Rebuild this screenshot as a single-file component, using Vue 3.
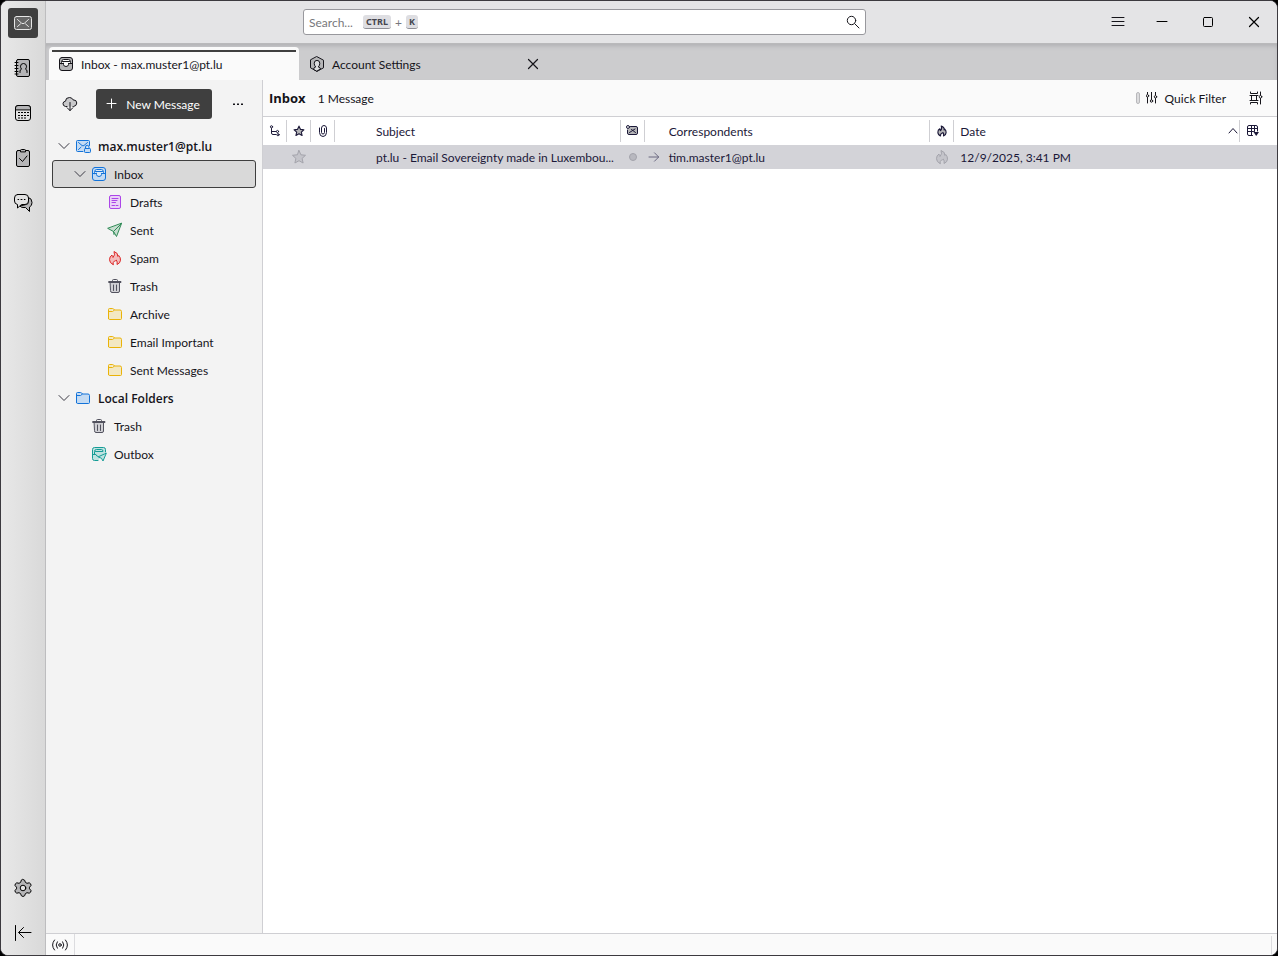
<script setup>
import { ref } from 'vue'

const query = ref('')

const spaces = [
  { id: 'mail', label: 'Mail', active: true },
  { id: 'book', label: 'Address Book' },
  { id: 'calendar', label: 'Calendar' },
  { id: 'tasks', label: 'Tasks' },
  { id: 'chat', label: 'Chat' },
]

const folders = [
  { name: 'max.muster1@pt.lu', icon: 'account', level: 1, tone: 'blue', open: true, bold: true },
  { name: 'Inbox', icon: 'inbox', level: 2, tone: 'blue', open: true, selected: true },
  { name: 'Drafts', icon: 'draft', level: 3, tone: 'purple' },
  { name: 'Sent', icon: 'sent', level: 3, tone: 'green' },
  { name: 'Spam', icon: 'spam', level: 3, tone: 'red' },
  { name: 'Trash', icon: 'trash', level: 3, tone: 'gray' },
  { name: 'Archive', icon: 'folder', level: 3, tone: 'yellow' },
  { name: 'Email Important', icon: 'folder', level: 3, tone: 'yellow' },
  { name: 'Sent Messages', icon: 'folder', level: 3, tone: 'yellow' },
  { name: 'Local Folders', icon: 'folder', level: 1, tone: 'blue', open: true, bold: true },
  { name: 'Trash', icon: 'trash', level: 2, tone: 'gray' },
  { name: 'Outbox', icon: 'outbox', level: 2, tone: 'teal' },
]
</script>

<template>
  <svg class="sprite" aria-hidden="true">
    <symbol id="i-mail" viewBox="0 0 20 20">
      <rect class="f" x="1.5" y="3.5" width="17" height="13" rx="2" />
      <path d="M4.500 6.500l4 3.600q1.500 1.200 3 0l4-3.600M4.500 13.500l3-2.600M15.500 13.500l-3-2.600" />
    </symbol>
    <symbol id="i-book" viewBox="0 0 20 20">
      <rect class="f" x="3.500" y="1.500" width="13" height="17" rx="1.500" />
      <path d="M2 4.500h3M2 7.500h3M2 10.500h3M2 13.500h3M2 16h3M7 14.500v-1.500q0-1.300 1.500-1.800Q7.500 9.800 7.500 8.200 7.700 5.500 10.500 5.500t3 2.700q0 1.600-1 3 1.500.5 1.500 1.800v1.500" />
    </symbol>
    <symbol id="i-calendar" viewBox="0 0 20 20">
      <rect class="paper" x="2.500" y="2.500" width="15" height="15" rx="2.500" />
      <path class="f" d="M2.500 6.500V5Q2.500 2.500 5 2.500h10q2.500 0 2.500 2.500v1.500z" />
      <path class="dash" d="M5 9.500h11M5 12.500h11M5 15h8" />
    </symbol>
    <symbol id="i-tasks" viewBox="0 0 20 20">
      <rect class="f" x="3.500" y="2.500" width="13" height="16" rx="1.500" />
      <path class="f" d="M7.500 3.500v-1q0-1 1-1h3q1 0 1 1v1z" />
      <path d="M6.500 10.500l3 3 4.500-5.500" />
    </symbol>
    <symbol id="i-chat" viewBox="0 0 20 20">
      <path class="f" d="M15.500 4.500q3.500.8 3.500 5 0 3.500-2.500 4.500v4.500l-4-4H10q-2 0-3-1.500l6-1.500q2.500 0 2.500-3z" />
      <path class="paper" d="M4.500 1.500H12q3.500 0 3.500 3.500v3q0 3.500-3.500 3.500H8.500l-4 3.500v-3.500Q1.500 11 1.500 8V5q0-3.500 3-3.500z" />
      <path d="M5 6.500h.7M8 6.500h1M11.300 6.500h.7" />
    </symbol>
    <symbol id="i-gear" viewBox="0 0 20 20">
      <path class="f" d="M10 1.500l1.700.8.700 2.100 1.600.9 2.200-.5 1.500 1.100.3 1.600-1.500 1.700v1.600l1.500 1.700-.3 1.600-1.500 1.100-2.200-.5-1.600.9-.7 2.100-1.700.8-1.700-.8-.7-2.100-1.600-.9-2.200.5-1.500-1.100-.3-1.600 1.500-1.700V9.200L2 7.500l.3-1.600 1.500-1.100 2.200.5 1.600-.9.700-2.100z" />
      <circle class="paper" cx="10" cy="10" r="2.800" />
    </symbol>
    <symbol id="i-collapse" viewBox="0 0 20 20">
      <path d="M2.500 2.500v15M18 9.500H6M10.500 4.500L5.500 9.500l5 5" />
    </symbol>
    <symbol id="i-inbox" viewBox="0 0 16 16">
      <rect class="f" x="1.500" y="1.500" width="13" height="13" rx="2.500" />
      <path class="paper" d="M3.500 7.500v-1q0-3 2-3h5q2 0 2 3v1h-2v1q-.2 2-2.500 2t-2.500-2v-1zM4.500 5.500h7M1.500 7.500h4M10.500 7.500h4" />
    </symbol>
    <symbol id="i-user" viewBox="0 0 16 16">
      <path class="f" d="M8 .7l6.500 3.500v7.600L8 15.400 1.500 11.800V4.200z" />
      <path class="paper" d="M4.500 13q0-1.500 2.200-2-1.500-1.600-1.500-3.800Q5.300 4.400 8 4.400t2.800 2.800q0 2.200-1.500 3.800 2.200.5 2.200 2L8 15z" />
    </symbol>
    <symbol id="i-cloud" viewBox="0 0 16 16">
      <path class="cloud" d="M5 10.500H3.500Q1 10 1 7.700 1 5.500 3.500 5.200 3.500 1.500 7.500 1.500q2.500 0 3.500 2.300 3.800 0 3.800 3.200-.2 3-3.300 3.500H11" />
      <path d="M8 6.500v8M5.200 11.800L8 14.600 10.800 11.800" />
    </symbol>
    <symbol id="i-plus" viewBox="0 0 16 16"><path d="M7.500 3v9M3 7.500h9" /></symbol>
    <symbol id="i-more" viewBox="0 0 16 16"><path class="solid" d="M3 7.500h2v1.500H3zM7 7.500h2v1.500H7zM11 7.500h2v1.500h-2z" /></symbol>
    <symbol id="i-chevron" viewBox="0 0 16 16"><path d="M3 5.500l5 5 5-5" /></symbol>
    <symbol id="i-up" viewBox="0 0 12 12"><path d="M2 8l4-4.500L10 8" /></symbol>
    <symbol id="i-close" viewBox="0 0 16 16"><path d="M3.500 3.500l9 9M12.500 3.500l-9 9" /></symbol>
    <symbol id="i-search" viewBox="0 0 16 16"><circle cx="6.500" cy="6.500" r="4.200" /><path d="M9.700 9.700l4.300 4.300" /></symbol>
    <symbol id="i-menu" viewBox="0 0 16 16"><path d="M2 3.500h12M2 7.500h12M2 11.500h12" /></symbol>
    <symbol id="i-min" viewBox="0 0 16 16"><path d="M3 7.500h10" /></symbol>
    <symbol id="i-max" viewBox="0 0 16 16"><rect x="3.500" y="3.500" width="9" height="9" rx="1" /></symbol>
    <symbol id="i-account" viewBox="0 0 16 16">
      <path class="f" d="M8 13.500H2.500q-1 0-1-1v-9q0-1 1-1h11q1 0 1 1v4" />
      <path d="M3.500 4.500L7 7.500q1 .7 2 0l3.500-3M3.500 11.500l2.500-2.300" />
      <path d="M10.500 10.500V9q0-1.700 1.700-1.700T14 9v1.500" />
      <rect class="f" x="9.500" y="10.500" width="6" height="4" rx=".8" />
    </symbol>
    <symbol id="i-draft" viewBox="0 0 16 16">
      <rect class="f" x="2.500" y="1.500" width="11" height="13" rx="1.500" />
      <path d="M5 4.500h6M5 6.500h5M5 8.500h3.500M5 11.500h2.500M9 11.500h2" />
    </symbol>
    <symbol id="i-sent" viewBox="0 0 16 16">
      <path class="f" d="M14.500 1.500L9.500 14.500l-3-5-5.500-3z" />
      <path d="M14.500 1.500l-8 8 .5 3" />
    </symbol>
    <symbol id="i-spam" viewBox="0 0 16 16">
      <path class="f" d="M6 14.500Q2.500 13 2.500 9.700q0-3.300 2.500-4.700 0 1.500 1 2.500Q8.500 5 7 1.500q4.500 1.500 3.800 5 .7-.3.900-1 2 2 1.800 4.700-.2 3-3.500 4.300.8-2.800-.8-4.500-.7 1-1.700 1Q5.800 12 6 14.500z" />
    </symbol>
    <symbol id="i-trash" viewBox="0 0 16 16">
      <path class="f" d="M3.500 4.500h9v8.500q0 1.500-1.500 1.500H5q-1.500 0-1.500-1.500z" />
      <path d="M2 3.500h12v1H2zM5.500 3.500v-1q0-1 1-1h3q1 0 1 1v1M6.500 7v5.500M9.500 7v5.500" />
    </symbol>
    <symbol id="i-folder" viewBox="0 0 16 16">
      <path class="f" d="M1.500 12.500v-9q0-1 1-1h3q1 0 1.500 1l.5.500H13q1.500 0 1.500 1.500v7q0 1-1 1h-11q-1 0-1-1zM2 5.500h3.500l2-1.500" />
    </symbol>
    <symbol id="i-outbox" viewBox="0 0 16 16">
      <path class="f" d="M7 14.500H3.500q-2 0-2-2v-9q0-2 2-2h9q2 0 2 2V6" />
      <path d="M3.500 8V5.500q0-2 2-2h5q1.500 0 1.500 1.500M4.500 5.500h7M1.500 8.500h3.500q.5 2 2 2" />
      <path class="f" d="M15.200 7.500l-3.200 7.500-1.500-2.700-3-1.300z" />
    </symbol>
    <symbol id="i-filter" viewBox="0 0 12 12">
      <path d="M1.500 0v2M1.500 5.500V11M5.500 0v7.500M9.500 0v3M9.500 6.500V11" />
      <circle cx="1.500" cy="3.800" r="1.200" /><circle cx="5.500" cy="9" r="1.200" /><circle cx="9.500" cy="4.800" r="1.200" />
    </symbol>
    <symbol id="i-display" viewBox="0 0 16 16">
      <path d="M2.500 2v1.500h7V2M2.500 14v-1.500h7V14M2 5.500h8M2 10.500h8M3.500 5.500v5M8.500 5.500v5M12.500 2v3M12.500 8.500V14" />
      <circle cx="12.500" cy="6.800" r="1.300" />
    </symbol>
    <symbol id="i-thread" viewBox="0 0 12 12">
      <path d="M2.500 3.500v4.500q0 1.500 1.500 1.500h3M2.500 6.500h4.500" />
      <circle cx="2.500" cy="1.800" r="1.100" /><circle cx="8.500" cy="6.500" r="1.100" /><circle cx="9" cy="9.700" r="1.100" />
    </symbol>
    <symbol id="i-star" viewBox="0 0 16 16">
      <path class="f" d="M8 1.500l1.900 4.300 4.600.5-3.400 3.100 1 4.600L8 11.700 3.900 14l1-4.600L1.500 6.300l4.600-.5z" />
    </symbol>
    <symbol id="i-clip" viewBox="0 0 12 12">
      <path d="M2.500 3v4.500q.2 4 3.500 4t3.500-4V3Q9.300.5 7 .5T4.500 3v4.500Q4.600 9 6 9t1.500-1.500V3.500" />
    </symbol>
    <symbol id="i-read" viewBox="0 0 12 12">
      <path class="f" d="M4.500 1.500h5.500q1.500 0 1.500 1.500v5q0 1.500-1.500 1.500H3Q1.500 9.500 1.500 8V5" />
      <path d="M3.500 7.500l5.500-3.500M9.500 7.500L5.500 4.500" /><circle class="paper" cx="2" cy="2" r="1.500" />
    </symbol>
    <symbol id="i-columns" viewBox="0 0 12 12">
      <path d="M5.500 10.500H2q-1.500 0-1.500-1.500V2Q.5.500 2 .5h7Q10.500.5 10.500 2v4M.5 3.500h10M.5 6.500h6M4.500.5v10M7.500.5v6" />
      <path class="solid" d="M6.500 7h5.500L9.200 11z" />
    </symbol>
    <symbol id="i-arrow" viewBox="0 0 12 12"><path d="M1 6h9.500M6.500 1.800L10.700 6l-4.200 4.200" /></symbol>
    <symbol id="i-online" viewBox="0 0 16 16">
      <circle cx="8" cy="8" r="1.300" />
      <path d="M5.300 4.800Q2.900 8 5.300 11.200M10.700 4.800q2.400 3.200 0 6.400M2.500 3Q-1.500 8 2.500 13M13.500 3q4 5 0 10" />
    </symbol>
  </svg>

  <div class="window">
    <nav class="spaces" aria-label="Spaces">
      <button v-for="s in spaces" :key="s.id" type="button" class="space" :class="{ active: s.active }" :aria-label="s.label">
        <svg class="ic20"><use :href="'#i-' + s.id" /></svg>
      </button>
      <span class="grow"></span>
      <button type="button" class="space" aria-label="Settings"><svg class="ic20"><use href="#i-gear" /></svg></button>
      <button type="button" class="space" aria-label="Collapse"><svg class="ic20"><use href="#i-collapse" /></svg></button>
    </nav>

    <div class="main">
      <header class="titlebar">
        <form class="search" @submit.prevent>
          <input v-model="query" type="text" placeholder="Search..." aria-label="Search" />
          <span class="keys"><kbd>CTRL</kbd><span>+</span><kbd>K</kbd></span>
          <button type="submit" aria-label="Search"><svg class="ic16"><use href="#i-search" /></svg></button>
        </form>
        <span class="grow"></span>
        <button type="button" class="menu" aria-label="Menu"><svg class="ic16"><use href="#i-menu" /></svg></button>
        <button type="button" class="win" aria-label="Minimize"><svg class="ic16"><use href="#i-min" /></svg></button>
        <button type="button" class="win" aria-label="Maximize"><svg class="ic16"><use href="#i-max" /></svg></button>
        <button type="button" class="win" aria-label="Close"><svg class="ic16 big"><use href="#i-close" /></svg></button>
      </header>

      <div class="tabs" role="tablist">
        <button type="button" class="tab current" role="tab" aria-selected="true">
          <svg class="ic16"><use href="#i-inbox" /></svg>Inbox - max.muster1@pt.lu
        </button>
        <div class="tabwrap">
          <button type="button" class="tab" role="tab" aria-selected="false">
            <svg class="ic16"><use href="#i-user" /></svg>Account Settings
          </button>
          <button type="button" class="tabclose" aria-label="Close tab"><svg class="ic16 big"><use href="#i-close" /></svg></button>
        </div>
      </div>

      <div class="body">
        <aside class="folders">
          <div class="bar">
            <button type="button" class="plain" aria-label="Get Messages"><svg class="ic16"><use href="#i-cloud" /></svg></button>
            <button type="button" class="new"><svg class="ic16"><use href="#i-plus" /></svg>New Message</button>
            <button type="button" class="plain" aria-label="Folder options"><svg class="ic16"><use href="#i-more" /></svg></button>
          </div>
          <ul class="tree">
            <li v-for="(f, i) in folders" :key="i">
              <a href="#" class="row" :class="['l' + f.level, { selected: f.selected, bold: f.bold }]">
                <svg class="ic16 chev"><use v-if="f.open" href="#i-chevron" /></svg>
                <svg class="ic16 ficon" :class="f.tone"><use :href="'#i-' + f.icon" /></svg>
                <span>{{ f.name }}</span>
              </a>
            </li>
          </ul>
        </aside>

        <main class="thread">
          <div class="head">
            <h1>Inbox</h1>
            <span>1 Message</span>
            <span class="grow"></span>
            <button type="button" class="quick">
              <i class="pill"></i><svg class="ic12"><use href="#i-filter" /></svg>Quick Filter
            </button>
            <button type="button" class="disp" aria-label="Message list display options"><svg class="ic16"><use href="#i-display" /></svg></button>
          </div>
          <table>
            <colgroup>
              <col class="n" /><col class="n" /><col class="n" /><col /><col class="n" /><col /><col class="n" /><col /><col class="pick" />
            </colgroup>
            <thead>
              <tr>
                <th><button type="button" aria-label="Thread"><svg class="ic12"><use href="#i-thread" /></svg></button></th>
                <th><button type="button" aria-label="Starred"><svg class="ic12 strong"><use href="#i-star" /></svg></button></th>
                <th><button type="button" aria-label="Attachments"><svg class="ic12"><use href="#i-clip" /></svg></button></th>
                <th><button type="button" class="label subject">Subject</button></th>
                <th><button type="button" aria-label="Read status"><svg class="ic12"><use href="#i-read" /></svg></button></th>
                <th><button type="button" class="label corr">Correspondents</button></th>
                <th><button type="button" aria-label="Spam status"><svg class="ic12 strong"><use href="#i-spam" /></svg></button></th>
                <th><button type="button" class="label date">Date<svg class="ic12"><use href="#i-up" /></svg></button></th>
                <th><button type="button" class="picker" aria-label="Select columns"><svg class="ic12"><use href="#i-columns" /></svg></button></th>
              </tr>
            </thead>
            <tbody>
              <tr>
                <td></td>
                <td class="faint"><svg class="ic16"><use href="#i-star" /></svg></td>
                <td></td>
                <td class="subj">pt.lu - Email Sovereignty made in Luxembou...</td>
                <td><i class="dot"></i></td>
                <td><div class="who"><svg class="ic12"><use href="#i-arrow" /></svg>tim.master1@pt.lu</div></td>
                <td class="faint"><svg class="ic16"><use href="#i-spam" /></svg></td>
                <td class="when" colspan="2">12/9/2025, 3:41 PM</td>
              </tr>
            </tbody>
          </table>
        </main>
      </div>

      <footer class="status">
        <button type="button" aria-label="Online"><svg class="ic16"><use href="#i-online" /></svg></button>
        <span class="grow"></span>
        <i class="end"></i>
      </footer>
    </div>
  </div>
</template>

<style>
html,
body {
  background: #000;
}
</style>

<style scoped>
.sprite {
  position: absolute;
  width: 0;
  height: 0;
}
.window {
  display: flex;
  box-sizing: border-box;
  min-height: 100vh;
  border: 1px solid #3c3a3f;
  border-radius: 8px;
  overflow: hidden;
  background: #fafafa;
  color: #15141a;
  font: 12px/17px Lato, "Open Sans", sans-serif;
  --fill: #b5b5b7;
  --paper: #f3f3f3;
}
button {
  display: flex;
  align-items: center;
  justify-content: center;
  margin: 0;
  padding: 0;
  border: 0;
  background: none;
  color: inherit;
  font: inherit;
}
svg {
  flex: none;
  fill: none;
  stroke: currentColor;
  stroke-linecap: round;
  stroke-linejoin: round;
}
.f {
  fill: var(--fill);
}
.paper {
  fill: var(--paper);
}
.cloud {
  fill: #c8c8ca;
}
.dash {
  stroke-dasharray: 2 1;
  stroke-linecap: butt;
}
.solid {
  fill: currentColor;
  stroke: none;
}
.ic20 {
  width: 20px;
  height: 20px;
}
.ic16 {
  width: 16px;
  height: 16px;
}
.ic12 {
  width: 12px;
  height: 12px;
}
.strong {
  stroke-width: 1.5;
}
.grow {
  flex: 1;
}

.spaces {
  display: flex;
  flex: none;
  flex-direction: column;
  align-items: center;
  gap: 15px;
  width: 44px;
  padding: 7px 0;
  border-right: 1px solid #bdbdbf;
  background: linear-gradient(90deg, #e8e8e8, #d9d9d9);
}
.space {
  width: 30px;
  height: 30px;
  border-radius: 3px;
  color: #000;
  --paper: #e2e2e2;
}
.space.active {
  background: #3f3f3f;
  color: #e6e6e6;
  --fill: #666;
}

.main {
  display: flex;
  flex: 1;
  flex-direction: column;
  min-width: 0;
}
.titlebar {
  display: flex;
  align-items: center;
  height: 42px;
  padding-left: 257px;
  border-bottom: 1px solid #b9b9bb;
  background: #e4e4e6;
}
.search {
  position: relative;
  flex: 0 1 563px;
}
.search input {
  display: block;
  box-sizing: border-box;
  width: 100%;
  height: 26px;
  padding: 0 32px 0 5px;
  border: 1px solid #98989d;
  border-radius: 3px;
  background: #fff;
  color: inherit;
  font: inherit;
}
.search input::placeholder {
  color: #77777c;
  opacity: 1;
}
.keys {
  position: absolute;
  top: 6px;
  left: 60px;
  display: flex;
  align-items: center;
  gap: 4px;
  color: #77777c;
  font-size: 12px;
  line-height: 13px;
}
kbd {
  padding: 0 3px;
  border-bottom: 1px solid #8f8f96;
  border-radius: 3px;
  background: #dedee2;
  color: #45454d;
  font: bold 9px/13px "Noto Sans", sans-serif;
}
.search button {
  position: absolute;
  top: 5px;
  right: 5px;
}
.menu {
  width: 42px;
  height: 42px;
}
.win {
  width: 46px;
  height: 42px;
  color: #000;
}
.big {
  stroke-width: 1.2;
}

.tabs {
  display: flex;
  height: 33px;
  padding: 3px 3px 0;
  background: #ccccce;
  box-shadow: inset 0 3px 4px -1px #b0b0b3;
}
.tab {
  justify-content: flex-start;
  gap: 7px;
  width: 250px;
  padding: 1px 10px 0;
  --paper: #dcdcde;
}
.tab.current {
  position: relative;
  padding: 1px 9px 0;
  border-radius: 4px 4px 0 0;
  background: #fafafa;
  --paper: #fafafa;
}
.tab.current::before {
  content: "";
  position: absolute;
  top: 3px;
  right: 3px;
  left: 3px;
  height: 2px;
  background: #3f3f3f;
}
.tabwrap {
  display: flex;
  align-items: center;
}
.tabwrap .tab {
  width: 226px;
}

.body {
  display: flex;
  flex: 1;
  min-height: 0;
}
.folders {
  flex: none;
  width: 216px;
  border-right: 1px solid #cfcfd3;
  background: #f3f3f3;
}
.bar {
  display: flex;
  align-items: center;
  padding: 9px 9px 13px;
  gap: 11px;
}
.plain {
  width: 30px;
  height: 30px;
}
.new {
  flex: 1;
  gap: 6px;
  height: 30px;
  padding-right: 4px;
  border-radius: 3px;
  background: #3f3f3f;
  color: #fff;
}
.tree {
  margin: 0;
  padding: 0 6px;
  list-style: none;
}
.row {
  display: flex;
  box-sizing: border-box;
  align-items: center;
  height: 28px;
  border: 1px solid transparent;
  border-radius: 3px;
  color: inherit;
  text-decoration: none;
  white-space: nowrap;
}
.l1 {
  padding-left: 3px;
}
.l2 {
  padding-left: 19px;
}
.l3 {
  padding-left: 35px;
}
.row.selected {
  border-color: #3f3f3f;
  background: #d9d9d9;
}
.bold {
  font-family: "Open Sans", sans-serif;
  font-weight: 600;
}
.chev {
  color: #3a3944;
}
.ficon {
  margin: 0 7px 0 3px;
}
.blue {
  color: #1373d9;
  --fill: #c4dbf3;
  --paper: #d8e8f8;
}
.purple {
  color: #ac45e8;
  --fill: #ead2f7;
}
.green {
  color: #2f8a56;
  --fill: #c6ddcf;
}
.red {
  color: #dc2626;
  --fill: #f3bcbc;
}
.gray {
  color: #52525e;
  --fill: #d0d0d4;
}
.yellow {
  color: #eab308;
  --fill: #f3e8c2;
}
.teal {
  color: #159c96;
  --fill: #bfe2e0;
}

.thread {
  flex: 1;
  min-width: 0;
  background: #fff;
}
.head {
  display: flex;
  align-items: center;
  height: 36px;
  padding: 0 5px 0 6px;
  border-bottom: 1px solid #cfcfd3;
  background: #fafafa;
}
.head h1 {
  margin: 0 12px 0 0;
  font: bold 13px/19px "Open Sans", sans-serif;
}
.quick {
  height: 28px;
  margin-right: 14px;
}
.quick svg {
  margin: 0 7px 0 6px;
}
.pill {
  width: 2px;
  height: 10px;
  border: 1px solid #b8b8bb;
  border-radius: 2px;
  background: #dcdcde;
}
.disp {
  width: 32px;
  height: 28px;
}
table {
  width: 100%;
  border-collapse: collapse;
  table-layout: fixed;
  color: #1b1838;
}
.n {
  width: 24px;
}
.pick {
  width: 37px;
}
th {
  height: 28px;
  padding: 0;
  font-weight: normal;
}
th button {
  width: 100%;
  height: 22px;
  border-right: 1px solid #cfcfd3;
}
th:last-child button {
  border: 0;
}
th button.label {
  justify-content: flex-start;
}
th button.subject {
  padding-left: 41px;
}
th button.corr {
  padding-left: 24px;
}
th button.date {
  justify-content: space-between;
  padding-left: 6px;
}
th button.picker {
  justify-content: flex-start;
  padding-left: 7px;
}
td {
  height: 24px;
  padding: 0;
  background: #d3d3d8;
  white-space: nowrap;
}
td svg {
  display: block;
}
.faint svg {
  margin-left: 4px;
  color: #a3a3ab;
  --fill: #c4c4ca;
}
td.subj {
  padding: 0 0 0 41px;
  overflow: hidden;
}
.dot {
  display: block;
  width: 6px;
  height: 6px;
  margin-left: 8px;
  border: 1px solid #a3a3ab;
  border-radius: 50%;
  background: #b8b8bf;
}
.who {
  display: flex;
  align-items: center;
  gap: 9px;
  padding-left: 3px;
}
.who svg {
  color: #6a6880;
}
td.when {
  padding-left: 6px;
}
.status {
  display: flex;
  height: 21px;
  border-top: 1px solid #cfcfd3;
  background: #fafafa;
}
.status button {
  width: 29px;
  border-right: 1px solid #dcdcdf;
}
.end {
  margin: 2px 5px 0 0;
  border-right: 1px solid #dcdcdf;
}
</style>
